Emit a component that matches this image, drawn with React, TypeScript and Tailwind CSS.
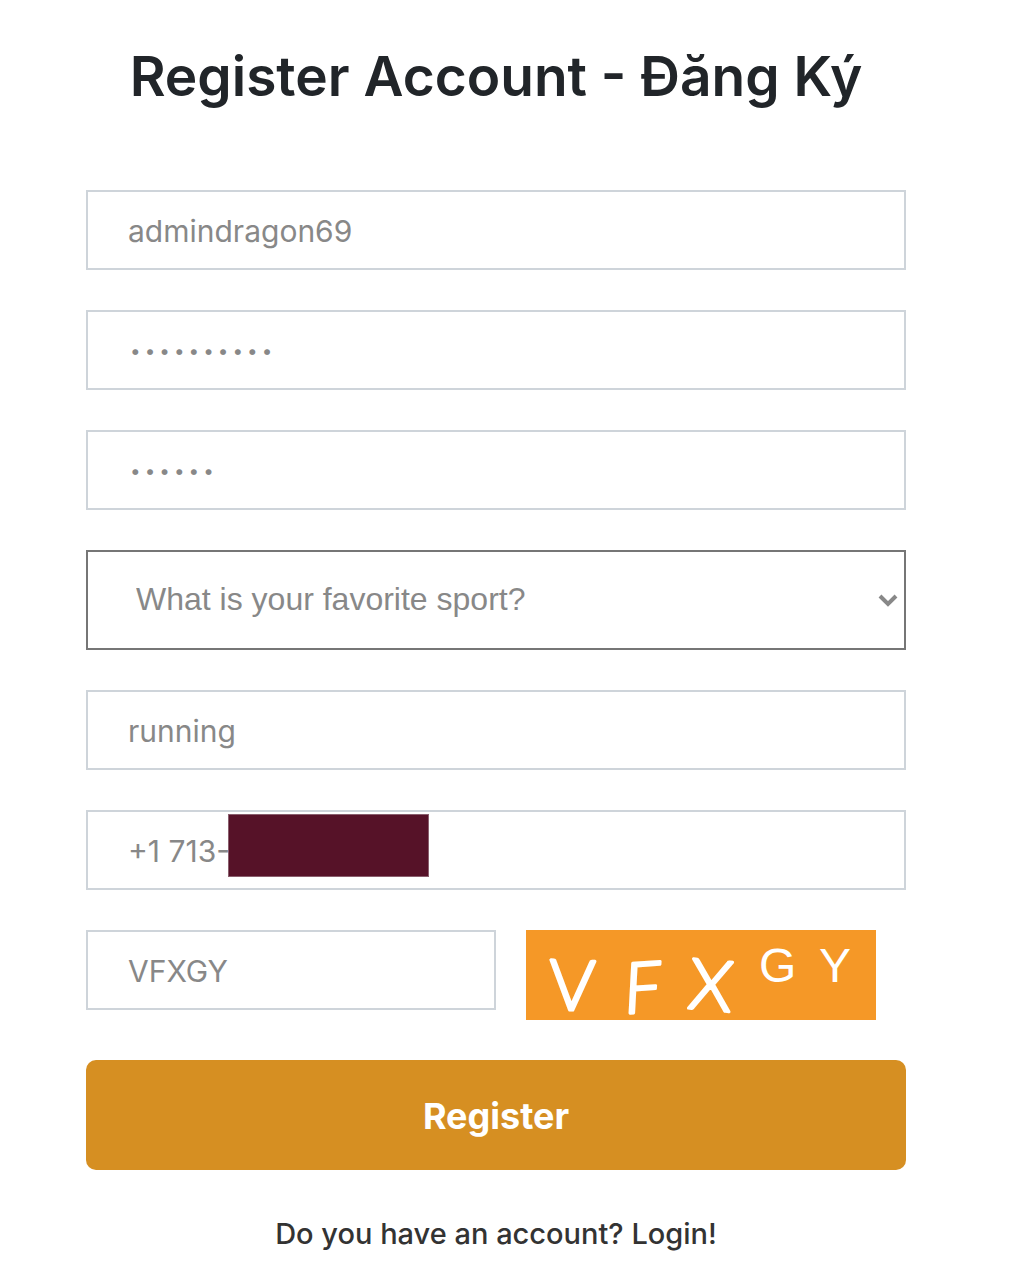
import { useState } from "react";
import clsx from "clsx";

const fieldClass =
  "block h-20 w-full rounded-none border-2 border-[#ced4da] bg-white px-10 text-[#888888] outline-none";

const fields = {
  username: "admindragon69",
  password: "dragon6969",
  secondPassword: "dragon",
  answer: "running",
  phone: "+1 713-",
  captcha: "VFXGY",
};

const questions = [
  "What is your favorite sport?",
  "What is your favorite food?",
  "What is your pet's name?",
];

function Field({ name, label, type = "text", value, onChange }: any) {
  return (
    <input
      type={type}
      name={name}
      aria-label={label}
      value={value}
      onChange={(e) => onChange(name, e.target.value)}
      className={clsx(fieldClass, type === "password" ? "text-[26px] font-extralight" : "pt-0.5 text-[30px]")}
    />
  );
}

function Captcha() {
  return (
    <svg viewBox="0 0 350 90" role="img" aria-label="Captcha" className="w-full overflow-visible bg-[#f59827]">
      <g
        fill="#fff"
        stroke="#fff"
        strokeWidth="3"
        strokeLinejoin="round"
        className="font-['Lato'] font-light"
        fontSize="70"
      >
        <text x="23" y="80" transform="rotate(2 46 55)">V</text>
        <text x="98" y="82" fontStyle="italic" transform="rotate(-4 120 57)">F</text>
        <text x="163" y="80" transform="rotate(5 186 55)">X</text>
      </g>
      <g fill="#fff" className="font-['Liberation_Sans']" fontSize="48">
        <text x="233" y="52">G</text>
        <text x="293" y="52">Y</text>
      </g>
    </svg>
  );
}

export default function App() {
  const [form, setForm] = useState(fields);
  const [question, setQuestion] = useState(questions[0]);

  const update = (name: string, value: string) => setForm({ ...form, [name]: value });

  return (
    <main className="bg-white pt-10 pr-[108px] pb-3 pl-[86px] font-['Inter',sans-serif]">
      <h1 className="text-center text-[55px] leading-[72px] font-semibold whitespace-nowrap text-[#212529]">
        Register Account - Đăng Ký
      </h1>

      <form className="mt-[78px] flex flex-col gap-10" onSubmit={(e) => e.preventDefault()}>
        <Field name="username" label="Username" value={form.username} onChange={update} />
        <Field name="password" label="Password" type="password" value={form.password} onChange={update} />
        <Field name="secondPassword" label="Second password" type="password" value={form.secondPassword} onChange={update} />

        <div className="relative">
          <select
            aria-label="Security question"
            value={question}
            onChange={(e) => setQuestion(e.target.value)}
            className="block h-[100px] w-full appearance-none rounded-none border-2 border-[#767676] bg-white px-12 pb-0.5 font-['Liberation_Sans',sans-serif] text-[32px] text-[#888888] outline-none"
          >
            {questions.map((q) => (
              <option key={q}>{q}</option>
            ))}
          </select>
          <svg
            viewBox="0 0 20 14"
            className="pointer-events-none absolute top-[43px] right-2 h-3.5 w-5"
            fill="none"
            stroke="#888888"
            strokeWidth="4"
          >
            <path d="M2 3l8 8 8-8" />
          </svg>
        </div>

        <Field name="answer" label="Answer" value={form.answer} onChange={update} />

        <div className="relative">
          <Field name="phone" label="Phone number" type="tel" value={form.phone} onChange={update} />
          <div className="absolute top-1 left-[142px] h-[63px] w-[201px] border border-[#8a5f6e] bg-[#561228]" />
        </div>

        <div className="grid grid-cols-2 items-start">
          <Field name="captcha" label="Captcha code" value={form.captcha} onChange={update} />
          <div className="px-[30px]">
            <Captcha />
          </div>
        </div>

        <button type="submit" className="h-[110px] w-full rounded-[10px] bg-[#d68f22] pt-0.5 text-[36px] font-bold text-white">
          Register
        </button>
      </form>

      <p className="mt-10 text-center text-[29px] leading-[48px] font-medium text-[#333333]">
        <a href="#login">Do you have an account? Login!</a>
      </p>
    </main>
  );
}
